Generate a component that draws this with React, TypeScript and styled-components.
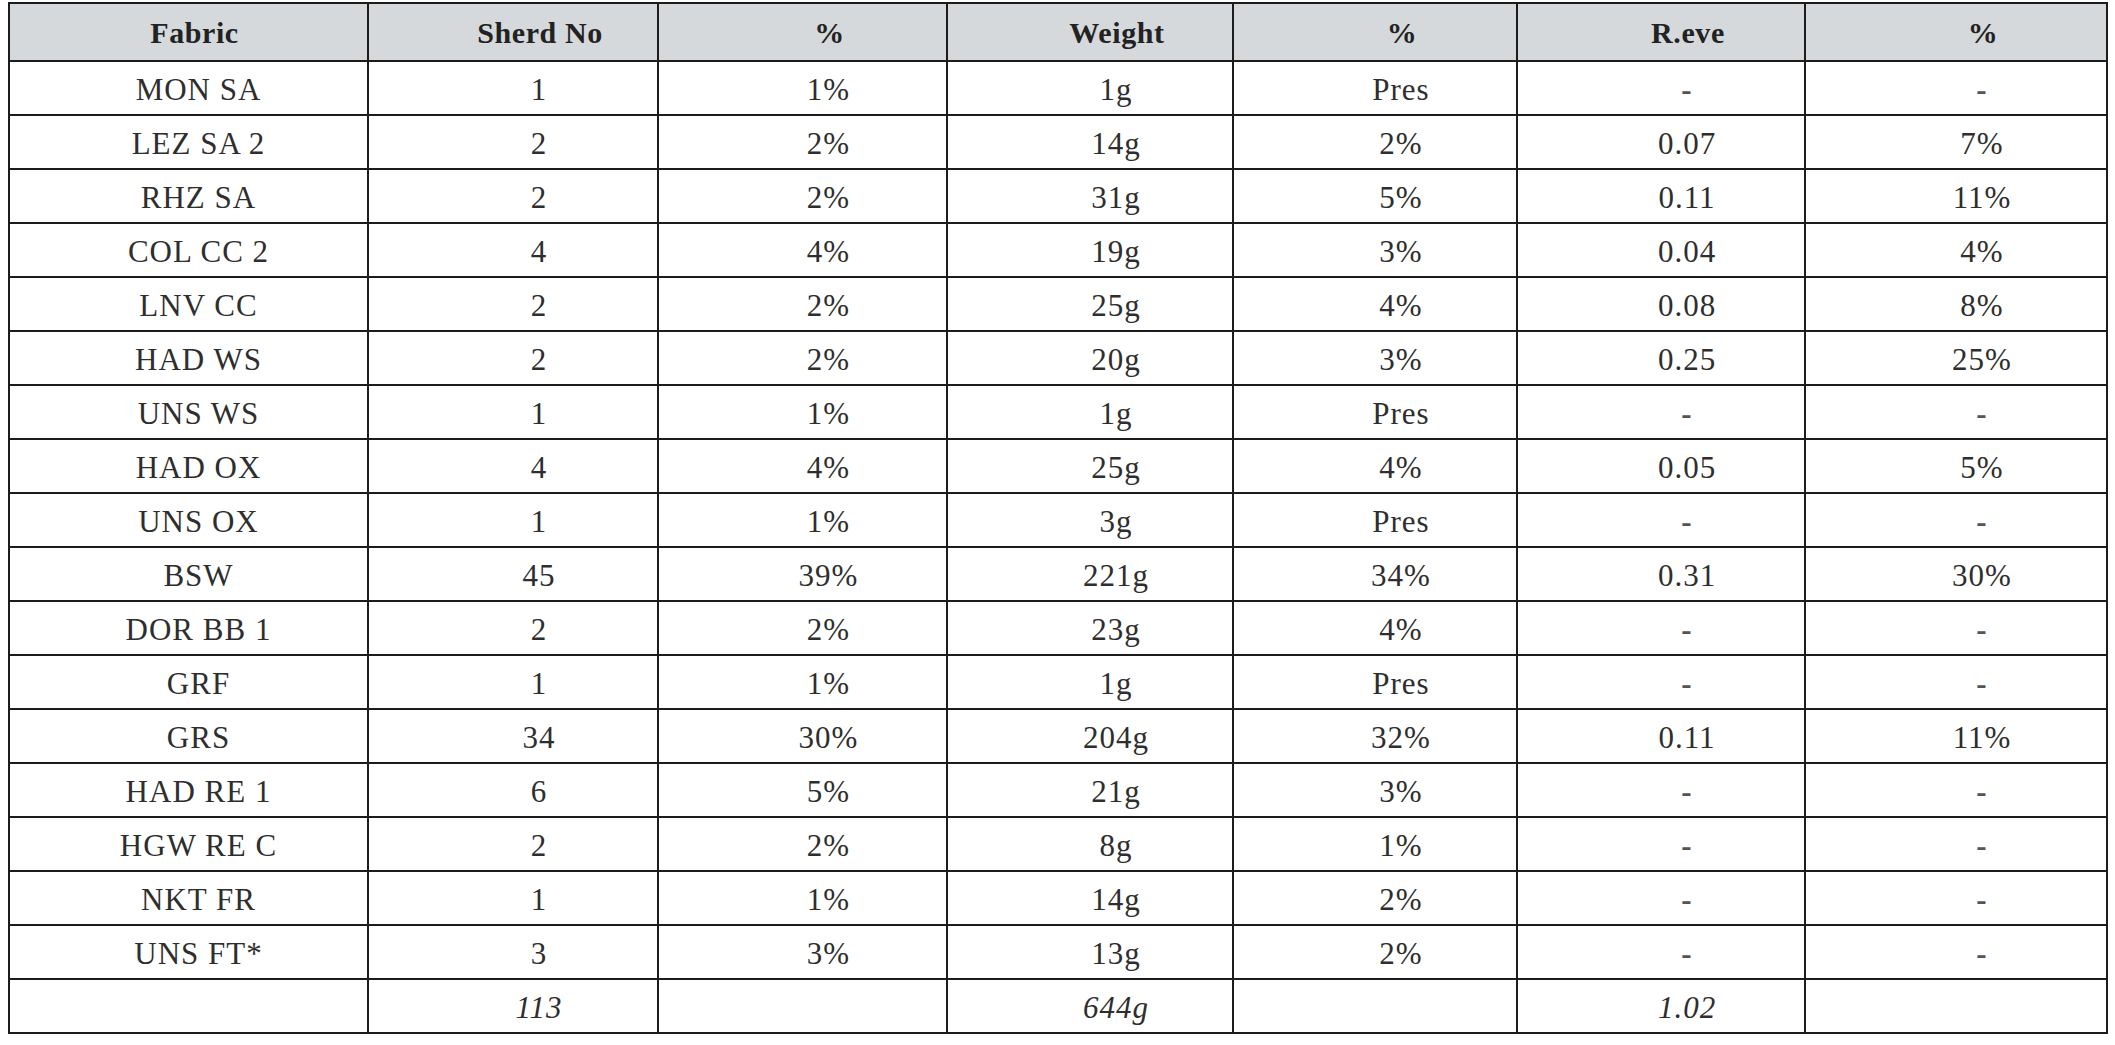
import styled, { createGlobalStyle } from 'styled-components'

const GlobalStyle = createGlobalStyle`
  html, body {
    margin: 0;
    padding: 0;
    background: #fff;
  }
  body {
    font-family: 'Liberation Serif', 'Times New Roman', serif;
    color: #2a2a2a;
  }
`

// column widths measured off the scan
const columns = '359px 290px 289px 286px 284px 288px 302px'

const Page = styled.div`
  padding: 2px 0 0 8px;
`

const Sheet = styled.div`
  display: grid;
  grid-template-columns: ${columns};
  width: 2098px;
  border-top: 2px solid #1c1c1c;
  border-left: 2px solid #1c1c1c;
`

// the scanned text sits a little right of each column's middle
const HeadCell = styled.div<{ $first?: boolean }>`
  box-sizing: border-box;
  height: 58px;
  display: flex;
  align-items: center;
  justify-content: center;
  padding-left: ${(p) => (p.$first ? '12px' : '54px')};
  padding-top: 2px;
  background: #d5d9db;
  border-right: 2px solid #1c1c1c;
  border-bottom: 2px solid #1c1c1c;
  font-size: 30px;
  font-weight: 700;
  letter-spacing: 0.6px;
  color: #222;
`

const Cell = styled.div<{ $italic?: boolean; $first?: boolean }>`
  box-sizing: border-box;
  height: 54px;
  display: flex;
  align-items: center;
  justify-content: center;
  padding-top: 4px;
  padding-left: ${(p) => (p.$first ? '20px' : '52px')};
  border-right: 2px solid #1c1c1c;
  border-bottom: 2px solid #1c1c1c;
  font-size: 31px;
  letter-spacing: 1px;
  font-style: ${(p) => (p.$italic ? 'italic' : 'normal')};
  color: #2e2e2e;
`

const Dash = styled.span`
  font-weight: 700;
  color: #555;
`

const headers = ['Fabric', 'Sherd No', '%', 'Weight', '%', 'R.eve', '%']

const rows: string[][] = [
  ['MON SA', '1', '1%', '1g', 'Pres', '-', '-'],
  ['LEZ SA 2', '2', '2%', '14g', '2%', '0.07', '7%'],
  ['RHZ SA', '2', '2%', '31g', '5%', '0.11', '11%'],
  ['COL CC 2', '4', '4%', '19g', '3%', '0.04', '4%'],
  ['LNV CC', '2', '2%', '25g', '4%', '0.08', '8%'],
  ['HAD WS', '2', '2%', '20g', '3%', '0.25', '25%'],
  ['UNS WS', '1', '1%', '1g', 'Pres', '-', '-'],
  ['HAD OX', '4', '4%', '25g', '4%', '0.05', '5%'],
  ['UNS OX', '1', '1%', '3g', 'Pres', '-', '-'],
  ['BSW', '45', '39%', '221g', '34%', '0.31', '30%'],
  ['DOR BB 1', '2', '2%', '23g', '4%', '-', '-'],
  ['GRF', '1', '1%', '1g', 'Pres', '-', '-'],
  ['GRS', '34', '30%', '204g', '32%', '0.11', '11%'],
  ['HAD RE 1', '6', '5%', '21g', '3%', '-', '-'],
  ['HGW RE C', '2', '2%', '8g', '1%', '-', '-'],
  ['NKT FR', '1', '1%', '14g', '2%', '-', '-'],
  ['UNS FT*', '3', '3%', '13g', '2%', '-', '-'],
]

const totals = ['', '113', '', '644g', '', '1.02', '']

export default function App() {
  return (
    <Page>
      <GlobalStyle />
      <Sheet>
        {headers.map((h, i) => (
          <HeadCell key={'h' + i} $first={i === 0}>
            {h}
          </HeadCell>
        ))}
        {rows.map((r, ri) =>
          r.map((v, ci) => (
            <Cell key={ri + '-' + ci} $first={ci === 0}>
              {v === '-' ? <Dash>-</Dash> : v}
            </Cell>
          ))
        )}
        {totals.map((v, i) => (
          <Cell key={'t' + i} $italic $first={i === 0}>
            {v}
          </Cell>
        ))}
      </Sheet>
    </Page>
  )
}
